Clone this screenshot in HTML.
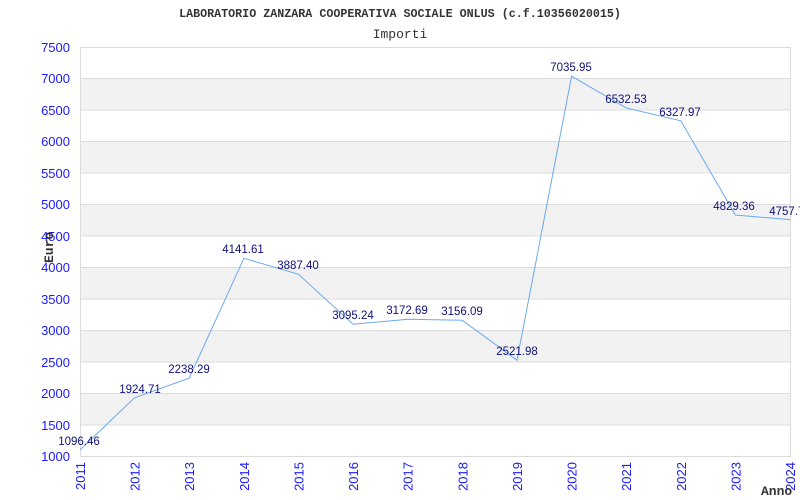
<!DOCTYPE html>
<html><head><meta charset="utf-8"><style>
html,body{margin:0;padding:0;background:#fff;width:800px;height:500px;overflow:hidden}
</style></head><body>
<svg width="800" height="500" xmlns="http://www.w3.org/2000/svg" font-family="Liberation Sans, sans-serif">
<rect width="800" height="500" fill="#fff"/>
<g fill="#f2f2f2">
<rect x="80" y="78.5" width="710" height="31.5"/>
<rect x="80" y="141.4" width="710" height="31.5"/>
<rect x="80" y="204.3" width="710" height="31.5"/>
<rect x="80" y="267.2" width="710" height="31.5"/>
<rect x="80" y="330.2" width="710" height="31.5"/>
<rect x="80" y="393.1" width="710" height="31.5"/>
</g>
<g stroke="#dcdcdc" stroke-width="1">
<line x1="80" x2="790" y1="47.5" y2="47.5"/>
<line x1="80" x2="790" y1="78.5" y2="78.5"/>
<line x1="80" x2="790" y1="110" y2="110"/>
<line x1="80" x2="790" y1="141.5" y2="141.5"/>
<line x1="80" x2="790" y1="173" y2="173"/>
<line x1="80" x2="790" y1="204.5" y2="204.5"/>
<line x1="80" x2="790" y1="236" y2="236"/>
<line x1="80" x2="790" y1="267.5" y2="267.5"/>
<line x1="80" x2="790" y1="299" y2="299"/>
<line x1="80" x2="790" y1="330.5" y2="330.5"/>
<line x1="80" x2="790" y1="362" y2="362"/>
<line x1="80" x2="790" y1="393.5" y2="393.5"/>
<line x1="80" x2="790" y1="425" y2="425"/>
<line x1="80" x2="790" y1="456.5" y2="456.5"/>
<line x1="80.5" x2="80.5" y1="47" y2="457"/>
<line x1="790.5" x2="790.5" y1="47" y2="457"/>
</g>
<text x="400" y="17" text-anchor="middle" font-family="Liberation Mono, monospace" font-size="11.7" font-weight="bold" fill="#333">LABORATORIO ZANZARA COOPERATIVA SOCIALE ONLUS (c.f.10356020015)</text>
<text x="400" y="38" text-anchor="middle" font-family="Liberation Mono, monospace" font-size="13" fill="#333">Importi</text>
<g fill="#1a1aff" font-size="13" text-anchor="end">
<text x="70" y="52">7500</text><text x="70" y="83">7000</text><text x="70" y="115">6500</text>
<text x="70" y="146">6000</text><text x="70" y="178">5500</text><text x="70" y="209">5000</text>
<text x="70" y="241">4500</text><text x="70" y="272">4000</text><text x="70" y="304">3500</text>
<text x="70" y="335">3000</text><text x="70" y="367">2500</text><text x="70" y="398">2000</text>
<text x="70" y="430">1500</text><text x="70" y="461">1000</text>
</g>
<g fill="#1a1aff" font-size="13" text-anchor="end">
<text transform="translate(85,462) rotate(-90)">2011</text>
<text transform="translate(139.6,462) rotate(-90)">2012</text>
<text transform="translate(194.2,462) rotate(-90)">2013</text>
<text transform="translate(248.9,462) rotate(-90)">2014</text>
<text transform="translate(303.5,462) rotate(-90)">2015</text>
<text transform="translate(358.1,462) rotate(-90)">2016</text>
<text transform="translate(412.7,462) rotate(-90)">2017</text>
<text transform="translate(467.3,462) rotate(-90)">2018</text>
<text transform="translate(522,462) rotate(-90)">2019</text>
<text transform="translate(576.6,462) rotate(-90)">2020</text>
<text transform="translate(631.2,462) rotate(-90)">2021</text>
<text transform="translate(685.8,462) rotate(-90)">2022</text>
<text transform="translate(740.4,462) rotate(-90)">2023</text>
<text transform="translate(795,462) rotate(-90)">2024</text>
</g>
<text transform="translate(53,263) rotate(-90)" font-family="Liberation Mono, monospace" font-size="13" font-weight="bold" fill="#333">Euro</text>
<text x="761" y="495" font-family="Liberation Mono, monospace" font-size="13" font-weight="bold" fill="#333">Anno</text>
<polyline fill="none" stroke="#6aaaf0" stroke-width="1" points="80,449.9 134.6,397.8 189.2,378.1 243.9,258.3 298.5,274.3 353.1,324.2 407.7,319.3 462.3,320.3 517,360.2 571.6,76.2 626.2,107.9 680.8,120.8 735.4,215 790,219.6"/>
<g fill="#10107a" font-size="11.5" text-anchor="middle">
<text x="79" y="445">1096.46</text>
<text x="140" y="393">1924.71</text>
<text x="189" y="373">2238.29</text>
<text x="243" y="253">4141.61</text>
<text x="298" y="269">3887.40</text>
<text x="353" y="319">3095.24</text>
<text x="407" y="314">3172.69</text>
<text x="462" y="315">3156.09</text>
<text x="517" y="355">2521.98</text>
<text x="571" y="71">7035.95</text>
<text x="626" y="103">6532.53</text>
<text x="680" y="116">6327.97</text>
<text x="734" y="210">4829.36</text>
<text x="790" y="215">4757.70</text>
</g>
</svg>
</body></html>
